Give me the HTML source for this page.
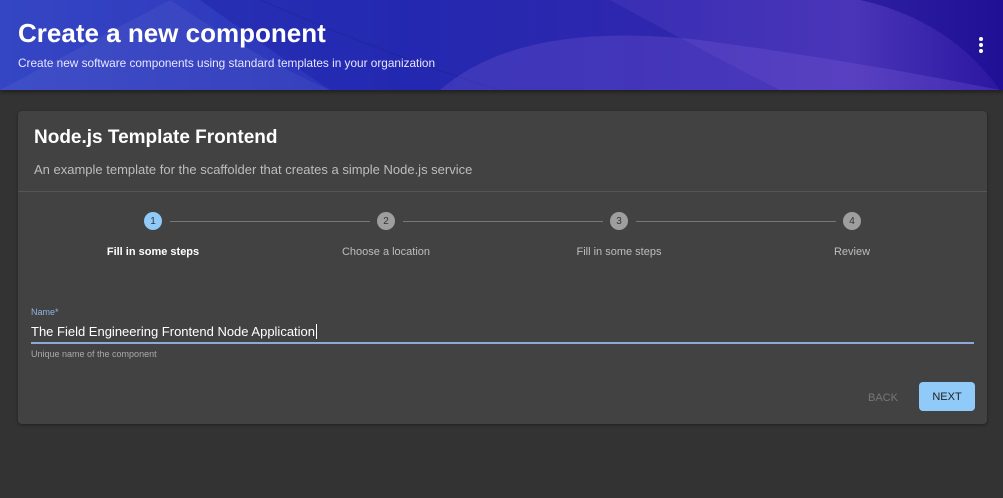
<!DOCTYPE html>
<html><head><style>
*{margin:0;padding:0;box-sizing:border-box}
body{width:1003px;height:498px;background:#333;font-family:"Liberation Sans",sans-serif;position:relative;overflow:hidden}
.hdr{position:absolute;left:0;top:0;width:1003px;height:90px;background:linear-gradient(90deg,#3546c4 0%,#2a32b8 40%,#3b2fb5 65%,#4a35b8 85%,#2a16a0 100%);overflow:hidden;box-shadow:0 2px 4px rgba(0,0,0,.4)}
.hdr h1{position:absolute;left:18px;top:18px;color:#fff;font-size:26px;font-weight:bold}
.hdr p{position:absolute;left:18px;top:56px;color:#e8e8ff;font-size:11.8px}
.dots{position:absolute;left:979px;top:37px}
.dots i{display:block;width:4px;height:4px;border-radius:2px;background:#fff;margin-bottom:2px}
.card{position:absolute;left:18px;top:111px;width:969px;height:313px;background:#424242;border-radius:4px;box-shadow:0 1px 3px rgba(0,0,0,.4)}
.card h2{position:absolute;left:16px;top:16px;color:#fff;font-size:19px;font-weight:bold}
.sub{position:absolute;left:16px;top:51px;color:#bdbdbd;font-size:13px}
.sep{position:absolute;left:0;top:80px;width:969px;height:1px;background:#555}
.step{position:absolute;top:101px;width:18px;height:18px;border-radius:9px;background:#9e9e9e;color:#333;font-size:10px;text-align:center;line-height:19px}
.lbl{position:absolute;top:135px;color:#bdbdbd;font-size:11px;width:160px;text-align:center}
.line{position:absolute;top:110px;height:1px;background:#777}
</style></head><body>
<div class="hdr">
<svg width="1003" height="90" style="position:absolute;left:0;top:0"><path d="M170 0 Q260 60 330 90 L0 90 Z" fill="rgba(255,255,255,0.05)"/><path d="M200 0 L610 0 Q720 60 780 90 L330 90 Q270 50 200 0Z" fill="rgba(20,20,160,0.3)"/><path d="M260 0 Q400 60 500 90" stroke="rgba(0,0,0,0.1)" fill="none"/><path d="M440 90 Q520 20 700 40 Q850 60 1000 90Z" fill="rgba(130,100,220,0.25)"/><path d="M860 0 L1003 0 L1003 90 L1000 90 Q950 20 860 0Z" fill="rgba(20,10,140,0.5)"/></svg>
<h1>Create a new component</h1>
<p>Create new software components using standard templates in your organization</p>
<div class="dots"><i></i><i></i><i></i></div>
</div>
<div class="card">
<h2>Node.js Template Frontend</h2>
<div class="sub">An example template for the scaffolder that creates a simple Node.js service</div>
<div class="sep"></div>
<div class="step" style="left:126px;background:#90caf9">1</div>
<div class="step" style="left:359px">2</div>
<div class="step" style="left:592px">3</div>
<div class="step" style="left:825px">4</div>
<div class="line" style="left:152px;width:200px"></div>
<div class="line" style="left:385px;width:200px"></div>
<div class="line" style="left:618px;width:200px"></div>
<div class="lbl" style="left:55px;color:#fff;font-weight:bold">Fill in some steps</div>
<div class="lbl" style="left:288px">Choose a location</div>
<div class="lbl" style="left:521px">Fill in some steps</div>
<div class="lbl" style="left:754px">Review</div>
<div style="position:absolute;left:13px;top:196px;color:#90b4e0;font-size:9px">Name*</div>
<div style="position:absolute;left:13px;top:213px;color:#fff;font-size:13px">The Field Engineering Frontend Node Application<span style="border-left:1px solid #fff;margin-left:1px"></span></div>
<div style="position:absolute;left:13px;top:231px;width:943px;height:2px;background:#90a8d8"></div>
<div style="position:absolute;left:13px;top:238px;color:#aaa;font-size:9px">Unique name of the component</div>
<div style="position:absolute;left:850px;top:281px;color:#777;font-size:11px">BACK</div>
<div style="position:absolute;left:901px;top:271px;width:56px;height:29px;background:#90caf9;border-radius:4px;color:#222;font-size:11px;text-align:center;line-height:31px">NEXT</div>
</div>
</body></html>
